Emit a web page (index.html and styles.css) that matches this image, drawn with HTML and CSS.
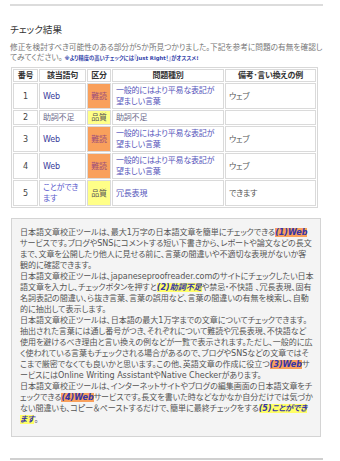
FILE: index.html
```html
<!DOCTYPE html>
<html lang="ja">
<head>
<meta charset="utf-8">
<link rel="stylesheet" href="styles.css">
</head>
<body>
<div class="page">
  <div class="rule"></div>
  <h2 class="title">チェック結果</h2>
  <p class="intro">修正を検討すべき可能性のある部分が5か所見つかりました。下記を参考に問題の有無を確認してみてください。<span class="note">※より精度の高いチェックには『Just Right！』がオススメ!</span></p>
  <table class="result">
    <colgroup>
      <col class="c-no"><col class="c-word"><col class="c-kind"><col class="c-type"><col class="c-alt">
    </colgroup>
    <thead>
      <tr><th>番号</th><th>該当語句</th><th>区分</th><th>問題種別</th><th>備考･言い換えの例</th></tr>
    </thead>
    <tbody>
      <tr><td class="no">1</td><td class="word">Web</td><td class="kind hard">難読</td><td class="type">一般的にはより平易な表記が望ましい言葉</td><td class="alt">ウェブ</td></tr>
      <tr><td class="no">2</td><td class="word gray">助詞不足</td><td class="kind qual">品質</td><td class="type gray">助詞不足</td><td class="alt"></td></tr>
      <tr><td class="no">3</td><td class="word">Web</td><td class="kind hard">難読</td><td class="type">一般的にはより平易な表記が望ましい言葉</td><td class="alt">ウェブ</td></tr>
      <tr><td class="no">4</td><td class="word">Web</td><td class="kind hard">難読</td><td class="type">一般的にはより平易な表記が望ましい言葉</td><td class="alt">ウェブ</td></tr>
      <tr><td class="no">5</td><td class="word light">ことができます</td><td class="kind qual">品質</td><td class="type">冗長表現</td><td class="alt">できます</td></tr>
    </tbody>
  </table>
  <div class="textbox">
    <div class="text">日本語文章校正ツールは、最大1万字の日本語文章を簡単にチェックできる<span class="hl o">(1)Web</span>サービスです。ブログやSNSにコメントする短い下書きから、レポートや論文などの長文まで、文章を公開したり他人に見せる前に、言葉の間違いや不適切な表現がないか客観的に確認できます。<br>日本語文章校正ツールは、japaneseproofreader.comのサイトにチェックしたい日本語文章を入力し、チェックボタンを押すと<span class="hl y">(2)助詞不足</span>や禁忌・不快語 、冗長表現、固有名詞表記の間違い、ら抜き言葉、言葉の誤用など、言葉の間違いの有無を検索し、自動的に抽出して表示します。<br>日本語文章校正ツールは、日本語の最大1万字までの文章についてチェックできます。抽出された言葉には通し番号がつき、それぞれについて難読や冗長表現、不快語など使用を避けるべき理由と言い換えの例などが一覧で表示されます。ただし、一般的に広く使われている言葉もチェックされる場合があるので、ブログやSNSなどの文章ではそこまで厳密でなくても良いかと思います。この他、英語文章の作成に役立つ<span class="hl o">(3)Web</span>サービスにはOnline Writing AssistantやNative Checkerがあります。<br>日本語文章校正ツールは、インターネットサイトやブログの編集画面の日本語文章をチェックできる<span class="hl o">(4)Web</span>サービスです。長文を書いた時などなかなか自分だけでは気づかない間違いも、コピー＆ペーストするだけで、簡単に最終チェックをする<span class="hl y">(5)ことができます</span>。</div>
  </div>
  <div class="rule bottom"></div>
</div>
</body>
</html>
```

FILE: styles.css
```css
html, body {
  margin: 0;
  padding: 0;
  background: #ffffff;
}

body {
  font-family: "DejaVu Sans", "Noto Sans CJK JP", sans-serif;
  font-feature-settings: "palt";
  color: #555;
}

.page {
  width: 313px;
  padding: 4px 0 0 10px;
}

.rule {
  height: 2px;
  background: #dcdcdc;
}

.rule.bottom {
  margin-top: 21px;
  background: #d0d0d0;
}

.title {
  margin: 18px 0 0 0;
  font-size: 9.6px;
  line-height: 12px;
  font-weight: normal;
  color: #333;
}

.intro {
  margin: 7px 0 0 0;
  font-size: 7.7px;
  line-height: 9.5px;
  color: #777;
}

.note {
  font-size: 5.3px;
  line-height: 8px;
  font-weight: bold;
  color: #3344aa;
  margin-left: 2px;
}

.result {
  margin: 5px 0 0 1px;
  width: 307px;
  table-layout: fixed;
  border-collapse: separate;
  border-spacing: 1px;
  border: 1px solid #d8d8d8;
  font-size: 8px;
  letter-spacing: -0.2px;
  line-height: 11px;
}

.c-no { width: 25px; }
.c-word { width: 47px; }
.c-kind { width: 24px; }
.c-type { width: 112px; }
.c-alt { width: auto; }

.result th,
.result td {
  border: 1px solid #dadada;
  padding: 1px 3px;
  vertical-align: middle;
}

.result th {
  padding: 0 2px;
  font-weight: bold;
  color: #333;
  text-align: center;
  white-space: nowrap;
  overflow: hidden;
}

.result td.no {
  text-align: center;
  color: #444;
}

.result td.word {
  color: #3a3a9a;
}

.result td.word.gray {
  color: #6a6a8a;
}

.result td.word.light {
  color: #5a5acc;
}

.result td.kind {
  padding: 1px 1px;
  text-align: center;
}

.result td.hard {
  background: #f9a05c;
  color: #a0507a;
}

.result td.qual {
  background: #ffff88;
  color: #555;
}

.result td.type {
  color: #5555bb;
}

.result td.type.gray {
  color: #6a6a8a;
}

.result td.alt {
  color: #555;
}

.textbox {
  margin-top: 10px;
  margin-left: 1px;
  width: 308px;
  height: 217px;
  border: 1px solid #d4d4d4;
  background: #f4f4f4;
  overflow: scroll;
}

.textbox::-webkit-scrollbar {
  width: 9px;
  height: 9px;
  background: #ececec;
}

.textbox::-webkit-scrollbar-thumb {
  background: #e6e6e6;
}

.textbox::-webkit-scrollbar-corner {
  background: #f4f4f4;
}

.text {
  padding: 8px 6px 8px 8px;
  font-size: 8.05px;
  letter-spacing: -0.05px;
  line-height: 11px;
  color: #555;
}

.hl {
  font-weight: bold;
  font-style: italic;
  color: #3535a8;
}

.hl.o {
  background: #f9a05c;
}

.hl.y {
  background: #ffff66;
}
```
